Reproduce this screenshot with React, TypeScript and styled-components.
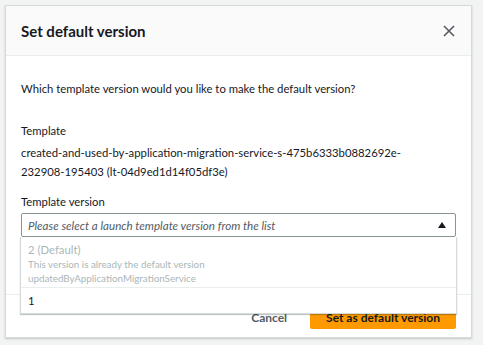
import React from "react";
import styled, { createGlobalStyle } from "styled-components";

const FONT = `Lato, "Open Sans", Arial, sans-serif`;

const Global = createGlobalStyle`
  html, body { margin: 0; padding: 0; background: #f2f3f3; }
  body { font-family: ${FONT}; color: #16191f; }
  * { box-sizing: border-box; }
`;

const Page = styled.div`
  width: 483px;
  height: 345px;
  padding: 5px 0 0 5px;
  overflow: hidden;
`;

const Modal = styled.div`
  width: 467px;
  height: 333px;
  background: #ffffff;
  border: 1px solid #d5dbdb;
  box-shadow: 0 1px 2px rgba(0, 28, 36, 0.2);
  display: flex;
  flex-direction: column;
`;

const Header = styled.div`
  height: 50px;
  flex: none;
  background: #fafafa;
  border-bottom: 1px solid #eaeded;
  display: flex;
  align-items: center;
  justify-content: space-between;
  padding: 0 16px 0 15px;
`;

const Title = styled.h2`
  margin: 0;
  font-size: 15px;
  font-weight: 700;
  color: #16191f;
`;

const CloseBtn = styled.button`
  border: 0;
  background: none;
  padding: 0;
  width: 12px;
  height: 12px;
  display: flex;
  color: #545b64;
  cursor: pointer;
`;

const Body = styled.div`
  flex: 1;
  padding: 24px 15px 0 15px;
  display: flex;
  flex-direction: column;
`;

const Text = styled.p<{ $mt?: number }>`
  margin: ${(p) => p.$mt ?? 0}px 0 0 0;
  font-size: 11.3px;
  line-height: 18px;
  color: #16191f;
`;

const Value = styled.div`
  margin-top: 3px;
  font-size: 11.3px;
  line-height: 19px;
  color: #16191f;
  width: 420px;
`;

const SelectWrap = styled.div`
  position: relative;
  margin-top: 2px;
`;

const SelectBox = styled.div`
  height: 24px;
  border: 1px solid #879596;
  border-radius: 2px;
  display: flex;
  align-items: center;
  justify-content: space-between;
  padding: 0 9px 0 6px;
  background: #fff;
`;

const Placeholder = styled.span`
  font-size: 11.6px;
  font-style: italic;
  color: #545b64;
`;

const Dropdown = styled.div`
  position: absolute;
  top: 24px;
  left: -1px;
  right: -1px;
  background: #fff;
  border: 1px solid #d5dbdb;
  border-top: 0;
  box-shadow: 0 1px 1px rgba(0, 28, 36, 0.25);
  z-index: 2;
`;

const Option = styled.div<{ $disabled?: boolean }>`
  padding: ${(p) => (p.$disabled ? "5px 7px 2px 7px" : "0 7px")};
  height: ${(p) => (p.$disabled ? "50px" : "26px")};
  display: flex;
  flex-direction: column;
  justify-content: ${(p) => (p.$disabled ? "flex-start" : "center")};
  color: ${(p) => (p.$disabled ? "#aab7b8" : "#16191f")};
  & + & {
    border-top: 1px solid #eaeded;
  }
`;

const OptLabel = styled.span`
  font-size: 11.3px;
  line-height: 15px;
`;

const OptDesc = styled.span`
  font-size: 9.8px;
  line-height: 14px;
`;

const Footer = styled.div`
  flex: none;
  height: 43px;
  border-top: 1px solid #eaeded;
  display: flex;
  align-items: center;
  justify-content: flex-end;
  gap: 7px;
  padding: 2px 15px 0 15px;
`;

const Btn = styled.button<{ $primary?: boolean }>`
  height: 24px;
  border: 0;
  border-radius: 2px;
  padding: 0 16px;
  font-family: ${FONT};
  font-size: 12px;
  font-weight: 700;
  background: ${(p) => (p.$primary ? "#ff9900" : "transparent")};
  color: ${(p) => (p.$primary ? "#16191f" : "#545b64")};
  cursor: pointer;
`;

export default function App() {
  return (
    <>
      <Global />
      <Page>
        <Modal>
          <Header>
            <Title>Set default version</Title>
            <CloseBtn aria-label="Close">
              <svg width="12" height="12" viewBox="0 0 12 12">
                <path d="M1 1 L11 11 M11 1 L1 11" stroke="currentColor" strokeWidth="1.6" fill="none" />
              </svg>
            </CloseBtn>
          </Header>
          <Body>
            <Text>Which template version would you like to make the default version?</Text>
            <Text $mt={24}>Template</Text>
            <Value>
              created-and-used-by-application-migration-service-s-475b6333b0882692e-232908-195403 (lt-04d9ed1d14f05df3e)
            </Value>
            <Text $mt={12}>Template version</Text>
            <SelectWrap>
              <SelectBox>
                <Placeholder>Please select a launch template version from the list</Placeholder>
                <svg width="8" height="6" viewBox="0 0 8 6">
                  <path d="M0 6 L4 0 L8 6 Z" fill="#16191f" />
                </svg>
              </SelectBox>
              <Dropdown>
                <Option $disabled>
                  <OptLabel>2 (Default)</OptLabel>
                  <OptDesc>This version is already the default version</OptDesc>
                  <OptDesc>updatedByApplicationMigrationService</OptDesc>
                </Option>
                <Option>
                  <OptLabel>1</OptLabel>
                </Option>
              </Dropdown>
            </SelectWrap>
          </Body>
          <Footer>
            <Btn>Cancel</Btn>
            <Btn $primary>Set as default version</Btn>
          </Footer>
        </Modal>
      </Page>
    </>
  );
}
